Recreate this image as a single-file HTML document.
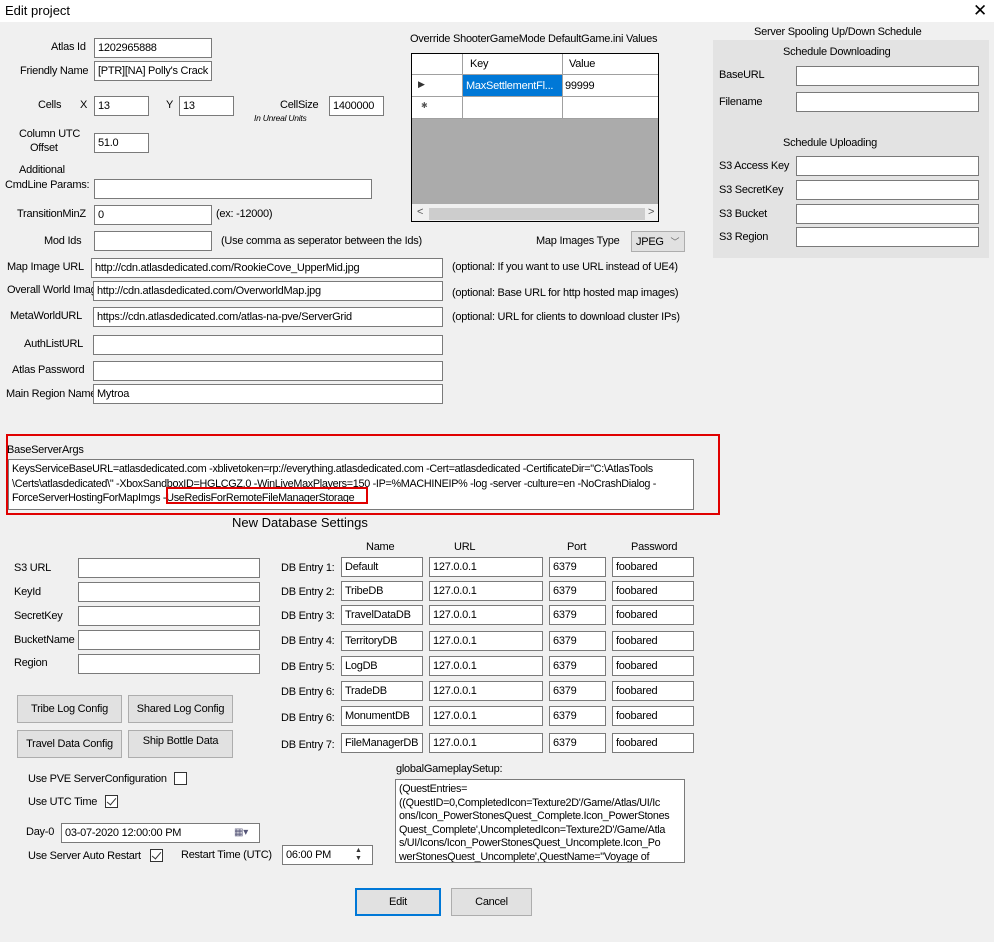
<!DOCTYPE html>
<html><head><style>
*{box-sizing:border-box;margin:0;padding:0}
body{width:994px;height:942px;background:#f0f0f0;font-family:"Liberation Sans",sans-serif;font-size:11px;letter-spacing:-0.25px;color:#000;position:relative;overflow:hidden}
.a{position:absolute;white-space:nowrap}
.i{position:absolute;background:#fff;border:1px solid #7a7a7a;height:20px;padding:3px 3px;white-space:nowrap;overflow:hidden}
.b{position:absolute;background:#e1e1e1;border:1px solid #adadad;text-align:center;height:28px;line-height:26px}
.c{position:absolute;width:13px;height:13px;border:1px solid #333;background:#fff}
.c.k::after{content:"";position:absolute;left:3px;top:0px;width:4px;height:8px;border:solid #333;border-width:0 1.5px 1.5px 0;transform:rotate(40deg)}
.t{position:absolute;background:#fff;border:1px solid #7a7a7a;padding:2px 3px;white-space:nowrap;overflow:hidden;font-size:10.8px;letter-spacing:-0.3px}
</style></head><body>
<div class="a" style="left:0;top:0;width:994px;height:22px;background:#fff"></div>
<div class="a" style="left:5px;top:3px;font-size:13px;letter-spacing:0">Edit project</div>
<div class="a" style="left:973px;top:1px;font-size:17px">✕</div>

<div class="a" style="left:51px;top:41px">Atlas Id</div><div class="i" style="left:94px;top:38px;width:118px">1202965888</div>
<div class="a" style="left:20px;top:65px">Friendly Name</div><div class="i" style="left:94px;top:61px;width:118px">[PTR][NA] Polly's Crack</div>
<div class="a" style="left:38px;top:99px">Cells</div><div class="a" style="left:80px;top:99px">X</div><div class="i" style="left:94px;top:96px;width:55px">13</div>
<div class="a" style="left:166px;top:99px">Y</div><div class="i" style="left:179px;top:96px;width:55px">13</div>
<div class="a" style="left:280px;top:99px">CellSize</div><div class="i" style="left:329px;top:96px;width:55px">1400000</div>
<div class="a" style="left:254px;top:113px;font-size:8.5px;font-style:italic">In Unreal Units</div>
<div class="a" style="left:19px;top:128px">Column UTC</div><div class="a" style="left:30px;top:142px">Offset</div><div class="i" style="left:94px;top:133px;width:55px">51.0</div>
<div class="a" style="left:19px;top:164px">Additional</div><div class="a" style="left:5px;top:179px">CmdLine Params:</div><div class="i" style="left:94px;top:179px;width:278px"></div>
<div class="a" style="left:17px;top:208px">TransitionMinZ</div><div class="i" style="left:94px;top:205px;width:118px">0</div><div class="a" style="left:216px;top:208px">(ex: -12000)</div>
<div class="a" style="left:44px;top:235px">Mod Ids</div><div class="i" style="left:94px;top:231px;width:118px"></div><div class="a" style="left:221px;top:235px">(Use comma as seperator between the Ids)</div>
<div class="a" style="left:7px;top:261px">Map Image URL</div><div class="i" style="left:91px;top:258px;width:352px">http://cdn.atlasdedicated.com/RookieCove_UpperMid.jpg</div><div class="a" style="left:452px;top:261px">(optional: If you want to use URL instead of UE4)</div>
<div class="a" style="left:7px;top:284px;width:86px;overflow:hidden">Overall World Image</div><div class="i" style="left:93px;top:281px;width:350px">http://cdn.atlasdedicated.com/OverworldMap.jpg</div><div class="a" style="left:452px;top:287px">(optional: Base URL for http hosted map images)</div>
<div class="a" style="left:10px;top:310px">MetaWorldURL</div><div class="i" style="left:93px;top:307px;width:350px">https://cdn.atlasdedicated.com/atlas-na-pve/ServerGrid</div><div class="a" style="left:452px;top:311px">(optional: URL for clients to download cluster IPs)</div>
<div class="a" style="left:24px;top:338px">AuthListURL</div><div class="i" style="left:93px;top:335px;width:350px"></div>
<div class="a" style="left:12px;top:364px">Atlas Password</div><div class="i" style="left:93px;top:361px;width:350px"></div>
<div class="a" style="left:6px;top:388px">Main Region Name</div><div class="i" style="left:93px;top:384px;width:350px">Mytroa</div>

<div class="a" style="left:410px;top:33px">Override ShooterGameMode DefaultGame.ini Values</div>
<div class="a" style="left:411px;top:53px;width:248px;height:169px;border:1px solid #000;background:#ababab;overflow:hidden">
 <div class="a" style="left:0;top:0;width:248px;height:64px;background:#fff"></div>
 <div class="a" style="left:0;top:20px;width:248px;border-top:1px solid #a0a0a0"></div>
 <div class="a" style="left:0;top:42px;width:248px;border-top:1px solid #a0a0a0"></div>
 <div class="a" style="left:0;top:64px;width:248px;border-top:1px solid #a0a0a0"></div>
 <div class="a" style="left:50px;top:0;height:64px;border-left:1px solid #a0a0a0"></div>
 <div class="a" style="left:150px;top:0;height:64px;border-left:1px solid #a0a0a0"></div>
 <div class="a" style="left:51px;top:21px;width:99px;height:21px;background:#0078d7"></div>
 <div class="a" style="left:58px;top:4px">Key</div><div class="a" style="left:157px;top:4px">Value</div>
 <div class="a" style="left:54px;top:26px;color:#fff">MaxSettlementFl...</div><div class="a" style="left:153px;top:26px">99999</div>
 <div class="a" style="left:6px;top:25px;font-size:9px;color:#333">▶</div><div class="a" style="left:9px;top:47px;font-size:8px;color:#555">✱</div>
 <div class="a" style="left:0;top:150px;width:248px;height:18px;background:#f0f0f0"></div>
 <div class="a" style="left:17px;top:154px;width:216px;height:12px;background:#cdcdcd"></div>
 <div class="a" style="left:5px;top:152px;color:#555">&lt;</div><div class="a" style="left:236px;top:152px;color:#555">&gt;</div>
</div>
<div class="a" style="left:536px;top:235px">Map Images Type</div>
<div class="a" style="left:631px;top:231px;width:54px;height:21px;border:1px solid #adadad;background:#e1e1e1;padding:3px 4px">JPEG <span style="color:#666;font-size:9px;margin-left:4px">﹀</span></div>

<div class="a" style="left:713px;top:40px;width:276px;height:218px;background:#e3e3e3"></div>
<div class="a" style="left:754px;top:26px">Server Spooling Up/Down Schedule</div>
<div class="a" style="left:783px;top:46px">Schedule Downloading</div>
<div class="a" style="left:719px;top:69px">BaseURL</div><div class="i" style="left:796px;top:66px;width:183px"></div>
<div class="a" style="left:719px;top:96px">Filename</div><div class="i" style="left:796px;top:92px;width:183px"></div>
<div class="a" style="left:783px;top:137px">Schedule Uploading</div>
<div class="a" style="left:719px;top:160px">S3 Access Key</div><div class="i" style="left:796px;top:156px;width:183px"></div>
<div class="a" style="left:719px;top:184px">S3 SecretKey</div><div class="i" style="left:796px;top:180px;width:183px"></div>
<div class="a" style="left:719px;top:208px">S3 Bucket</div><div class="i" style="left:796px;top:204px;width:183px"></div>
<div class="a" style="left:719px;top:231px">S3 Region</div><div class="i" style="left:796px;top:227px;width:183px"></div>

<div class="a" style="left:6px;top:434px;width:714px;height:81px;border:2px solid #e00000"></div>
<div class="a" style="left:7px;top:444px">BaseServerArgs</div>
<div class="t" style="left:8px;top:459px;width:686px;height:51px;line-height:14.5px">KeysServiceBaseURL=atlasdedicated.com -xblivetoken=rp://everything.atlasdedicated.com -Cert=atlasdedicated -CertificateDir="C:\AtlasTools<br>\Certs\atlasdedicated\" -XboxSandboxID=HGLCGZ.0 -WinLiveMaxPlayers=150 -IP=%MACHINEIP% -log -server -culture=en -NoCrashDialog -<br>ForceServerHostingForMapImgs -UseRedisForRemoteFileManagerStorage</div>
<div class="a" style="left:166px;top:487px;width:202px;height:17px;border:2px solid #e00000"></div>

<div class="a" style="left:232px;top:515px;font-size:13px;letter-spacing:0">New Database Settings</div>
<div class="a" style="left:14px;top:562px">S3 URL</div><div class="i" style="left:78px;top:558px;width:182px"></div>
<div class="a" style="left:14px;top:586px">KeyId</div><div class="i" style="left:78px;top:582px;width:182px"></div>
<div class="a" style="left:14px;top:610px">SecretKey</div><div class="i" style="left:78px;top:606px;width:182px"></div>
<div class="a" style="left:14px;top:634px">BucketName</div><div class="i" style="left:78px;top:630px;width:182px"></div>
<div class="a" style="left:14px;top:657px">Region</div><div class="i" style="left:78px;top:654px;width:182px"></div>

<div class="a" style="left:366px;top:541px">Name</div><div class="a" style="left:454px;top:541px">URL</div><div class="a" style="left:567px;top:541px">Port</div><div class="a" style="left:631px;top:541px">Password</div>

<div class="a" style="left:281px;top:562px">DB Entry 1:</div><div class="i" style="left:341px;top:557px;width:82px">Default</div><div class="i" style="left:429px;top:557px;width:114px">127.0.0.1</div><div class="i" style="left:549px;top:557px;width:57px">6379</div><div class="i" style="left:612px;top:557px;width:82px">foobared</div>
<div class="a" style="left:281px;top:586px">DB Entry 2:</div><div class="i" style="left:341px;top:581px;width:82px">TribeDB</div><div class="i" style="left:429px;top:581px;width:114px">127.0.0.1</div><div class="i" style="left:549px;top:581px;width:57px">6379</div><div class="i" style="left:612px;top:581px;width:82px">foobared</div>
<div class="a" style="left:281px;top:610px">DB Entry 3:</div><div class="i" style="left:341px;top:605px;width:82px">TravelDataDB</div><div class="i" style="left:429px;top:605px;width:114px">127.0.0.1</div><div class="i" style="left:549px;top:605px;width:57px">6379</div><div class="i" style="left:612px;top:605px;width:82px">foobared</div>
<div class="a" style="left:281px;top:635px">DB Entry 4:</div><div class="i" style="left:341px;top:631px;width:82px">TerritoryDB</div><div class="i" style="left:429px;top:631px;width:114px">127.0.0.1</div><div class="i" style="left:549px;top:631px;width:57px">6379</div><div class="i" style="left:612px;top:631px;width:82px">foobared</div>
<div class="a" style="left:281px;top:661px">DB Entry 5:</div><div class="i" style="left:341px;top:656px;width:82px">LogDB</div><div class="i" style="left:429px;top:656px;width:114px">127.0.0.1</div><div class="i" style="left:549px;top:656px;width:57px">6379</div><div class="i" style="left:612px;top:656px;width:82px">foobared</div>
<div class="a" style="left:281px;top:686px">DB Entry 6:</div><div class="i" style="left:341px;top:681px;width:82px">TradeDB</div><div class="i" style="left:429px;top:681px;width:114px">127.0.0.1</div><div class="i" style="left:549px;top:681px;width:57px">6379</div><div class="i" style="left:612px;top:681px;width:82px">foobared</div>
<div class="a" style="left:281px;top:712px">DB Entry 6:</div><div class="i" style="left:341px;top:706px;width:82px">MonumentDB</div><div class="i" style="left:429px;top:706px;width:114px">127.0.0.1</div><div class="i" style="left:549px;top:706px;width:57px">6379</div><div class="i" style="left:612px;top:706px;width:82px">foobared</div>
<div class="a" style="left:281px;top:739px">DB Entry 7:</div><div class="i" style="left:341px;top:733px;width:82px">FileManagerDB</div><div class="i" style="left:429px;top:733px;width:114px">127.0.0.1</div><div class="i" style="left:549px;top:733px;width:57px">6379</div><div class="i" style="left:612px;top:733px;width:82px">foobared</div>

<div class="b" style="left:17px;top:695px;width:105px">Tribe Log Config</div>
<div class="b" style="left:128px;top:695px;width:105px">Shared Log Config</div>
<div class="b" style="left:17px;top:730px;width:105px">Travel Data Config</div>
<div class="b" style="left:128px;top:730px;width:105px;line-height:20px">Ship Bottle Data</div>

<div class="a" style="left:28px;top:773px">Use PVE ServerConfiguration</div><div class="c" style="left:174px;top:772px"></div>
<div class="a" style="left:28px;top:796px">Use UTC Time</div><div class="c k" style="left:105px;top:795px"></div>
<div class="a" style="left:26px;top:826px">Day-0</div>
<div class="i" style="left:61px;top:823px;width:199px">03-07-2020 12:00:00 PM<span class="a" style="left:172px;top:3px;color:#557;font-size:10px">▦▾</span></div>
<div class="a" style="left:28px;top:850px">Use Server Auto Restart</div><div class="c k" style="left:150px;top:849px"></div>
<div class="a" style="left:181px;top:849px">Restart Time (UTC)</div>
<div class="i" style="left:282px;top:845px;width:91px">06:00 PM<span class="a" style="left:72px;top:1px;font-size:7px;line-height:8px;color:#333">▲<br>▼</span></div>

<div class="a" style="left:396px;top:763px">globalGameplaySetup:</div>
<div class="t" style="left:395px;top:779px;width:290px;height:84px;line-height:13.5px;padding-top:3px">(QuestEntries=<br>((QuestID=0,CompletedIcon=Texture2D'/Game/Atlas/UI/Ic<br>ons/Icon_PowerStonesQuest_Complete.Icon_PowerStones<br>Quest_Complete',UncompletedIcon=Texture2D'/Game/Atla<br>s/UI/Icons/Icon_PowerStonesQuest_Uncomplete.Icon_Po<br>werStonesQuest_Uncomplete',QuestName="Voyage of</div>

<div class="b" style="left:355px;top:888px;width:86px;border:2px solid #0078d7;line-height:24px">Edit</div>
<div class="b" style="left:451px;top:888px;width:81px">Cancel</div>
</body></html>
